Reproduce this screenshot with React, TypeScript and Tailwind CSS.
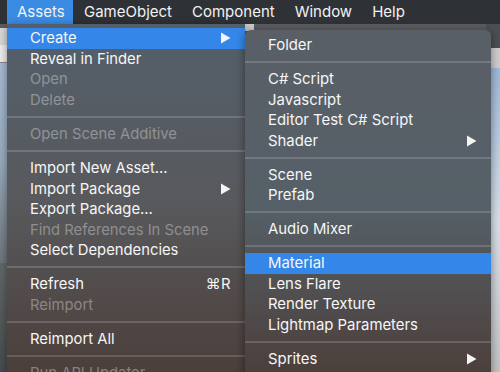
import React from "react";

type Item =
  | { sep: true }
  | { label: string; disabled?: boolean; arrow?: boolean; active?: boolean; shortcut?: string };

const leftItems: Item[] = [
  { label: "Create", arrow: true, active: true },
  { label: "Reveal in Finder" },
  { label: "Open", disabled: true },
  { label: "Delete", disabled: true },
  { sep: true },
  { label: "Open Scene Additive", disabled: true },
  { sep: true },
  { label: "Import New Asset..." },
  { label: "Import Package", arrow: true },
  { label: "Export Package..." },
  { label: "Find References In Scene", disabled: true },
  { label: "Select Dependencies" },
  { sep: true },
  { label: "Refresh", shortcut: "⌘R" },
  { label: "Reimport", disabled: true },
  { sep: true },
  { label: "Reimport All" },
  { sep: true },
  { label: "Run API Updater", disabled: true },
];

const rightItems: Item[] = [
  { label: "Folder" },
  { sep: true },
  { label: "C# Script" },
  { label: "Javascript" },
  { label: "Editor Test C# Script" },
  { label: "Shader", arrow: true },
  { sep: true },
  { label: "Scene" },
  { label: "Prefab" },
  { sep: true },
  { label: "Audio Mixer" },
  { sep: true },
  { label: "Material", active: true },
  { label: "Lens Flare" },
  { label: "Render Texture" },
  { label: "Lightmap Parameters" },
  { sep: true },
  { label: "Sprites", arrow: true },
];

function Arrow() {
  return (
    <svg width="11" height="12" viewBox="0 0 11 12" className="shrink-0">
      <path d="M1 0.5 L10.5 6 L1 11.5 Z" fill="#f4f4f4" />
    </svg>
  );
}

function MenuList({ items, sepH }: { items: Item[]; sepH: string }) {
  return (
    <>
      {items.map((it, i) =>
        "sep" in it ? (
          <div key={i} className={`${sepH} flex items-center`}>
            <div className="h-[2px] w-full bg-white/[0.16]" />
          </div>
        ) : (
          <div
            key={i}
            className={`h-[20.5px] flex items-center justify-between pl-[23px] pr-[14px] ${
              it.active ? "bg-[#3487e8]" : ""
            } ${it.disabled ? "text-white/35" : "text-[#f6f6f6]"}`}
          >
            <span>{it.label}</span>
            {it.arrow && <Arrow />}
            {it.shortcut && <span className="tracking-[0.5px]">{it.shortcut}</span>}
          </div>
        )
      )}
    </>
  );
}

export default function App() {
  return (
    <div
      className="relative w-[500px] h-[372px] overflow-hidden bg-[#3a3d41]"
      style={{ fontFamily: "Inter, 'Noto Sans', sans-serif" }}
    >
      {/* desktop / editor behind */}
      <div className="absolute left-0 top-[24px] w-full h-[348px] bg-gradient-to-b from-[#5a5c5f] via-[#4c4f52] to-[#3a3c3e]" />
      <div className="absolute left-0 top-[28px] w-[10px] h-[17px] bg-[#d8d8d8]" />
      <div className="absolute left-0 top-[45px] w-[10px] h-[18px] bg-[#ececec] border-b border-[#888]" />
      <div className="absolute left-0 top-[63px] w-[10px] h-[200px] bg-gradient-to-b from-[#a6bbd2] via-[#98aabc] to-[#6c7478]" />
      <div className="absolute left-0 top-[263px] w-[10px] h-[109px] bg-gradient-to-b from-[#626868] to-[#474b4d]" />
      <div className="absolute right-0 top-[24px] w-[14px] h-[24px] bg-[#4c4f53]" />
      <div className="absolute right-0 top-[48px] w-[14px] h-[20px] bg-[#cfcfcf]" />
      <div className="absolute right-0 top-[68px] w-[14px] h-[304px] bg-gradient-to-b from-[#9fb9d8] via-[#d8e0ea] to-[#c2c4c4]" />
      <div className="absolute left-[240px] top-[24px] w-[14px] h-[7px] bg-[#cfcfcf]" />

      {/* menu bar */}
      <div className="relative h-[24px] bg-[#2e3135] flex items-stretch text-[15px] text-[#f2f2f2]">
        <div className="ml-[7px] w-[66px] bg-[#3a8be3] flex items-center pl-[10px]">Assets</div>
        <div className="ml-[11px] flex items-center">GameObject</div>
        <div className="ml-[20px] flex items-center">Component</div>
        <div className="ml-[20px] flex items-center">Window</div>
        <div className="ml-[20px] flex items-center">Help</div>
      </div>

      {/* left menu */}
      <div className="absolute left-[7px] top-[24px] w-[238px] h-[360px] pt-[4px] text-[14.8px] rounded-b-[5px] bg-gradient-to-b from-[#535f6b] via-[#58595c] to-[#4a3d39] shadow-[0_2px_8px_rgba(0,0,0,0.4)]">
        <div className="flex flex-col">
          <MenuList items={leftItems} sepH="h-[13.7px]" />
        </div>
      </div>

      {/* submenu */}
      <div className="absolute left-[245px] top-[30px] w-[246px] h-[350px] pt-[5px] text-[14.9px] rounded-t-[6px] bg-gradient-to-b from-[#5a5f66] via-[#556068] to-[#4b3e3a] shadow-[0_2px_10px_rgba(0,0,0,0.45)]">
        <div className="flex flex-col">
          <MenuList items={rightItems} sepH="h-[13.5px]" />
        </div>
      </div>
    </div>
  );
}
